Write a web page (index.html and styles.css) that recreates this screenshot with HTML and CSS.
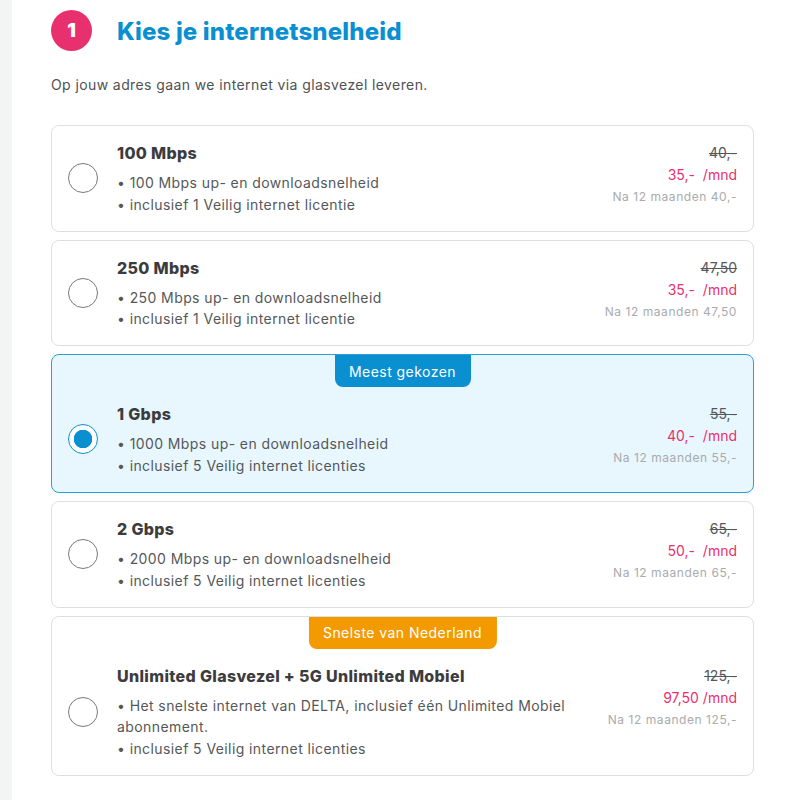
FILE: index.html
```html
<!DOCTYPE html>
<html lang="nl">
<head>
<meta charset="utf-8">
<title>Kies je internetsnelheid</title>
<link rel="stylesheet" href="styles.css">
</head>
<body>
<div class="page">
  <div class="rail"></div>
  <main class="main">
    <header class="head">
      <span class="step">1</span>
      <h1 class="title">Kies je internetsnelheid</h1>
    </header>
    <p class="intro">Op jouw adres gaan we internet via glasvezel leveren.</p>
    <div class="list">
      <label class="card">
        <span class="radio"></span>
        <div class="body">
          <h2 class="name">100 Mbps</h2>
          <p class="desc">• 100 Mbps up- en downloadsnelheid<br>• inclusief 1 Veilig internet licentie</p>
        </div>
        <div class="price">
          <s class="old">40,-</s>
          <span class="now">35,- &nbsp;/mnd</span>
          <span class="later">Na 12 maanden 40,-</span>
        </div>
      </label>
      <label class="card">
        <span class="radio"></span>
        <div class="body">
          <h2 class="name">250 Mbps</h2>
          <p class="desc">• 250 Mbps up- en downloadsnelheid<br>• inclusief 1 Veilig internet licentie</p>
        </div>
        <div class="price">
          <s class="old">47,50</s>
          <span class="now">35,- &nbsp;/mnd</span>
          <span class="later">Na 12 maanden 47,50</span>
        </div>
      </label>
      <label class="card badged selected">
        <span class="badge blue">Meest gekozen</span>
        <span class="radio"></span>
        <div class="body">
          <h2 class="name">1 Gbps</h2>
          <p class="desc">• 1000 Mbps up- en downloadsnelheid<br>• inclusief 5 Veilig internet licenties</p>
        </div>
        <div class="price">
          <s class="old">55,-</s>
          <span class="now">40,- &nbsp;/mnd</span>
          <span class="later">Na 12 maanden 55,-</span>
        </div>
      </label>
      <label class="card">
        <span class="radio"></span>
        <div class="body">
          <h2 class="name">2 Gbps</h2>
          <p class="desc">• 2000 Mbps up- en downloadsnelheid<br>• inclusief 5 Veilig internet licenties</p>
        </div>
        <div class="price">
          <s class="old">65,-</s>
          <span class="now">50,- &nbsp;/mnd</span>
          <span class="later">Na 12 maanden 65,-</span>
        </div>
      </label>
      <label class="card badged">
        <span class="badge orange">Snelste van Nederland</span>
        <span class="radio"></span>
        <div class="body">
          <h2 class="name">Unlimited Glasvezel + 5G Unlimited Mobiel</h2>
          <p class="desc">• Het snelste internet van DELTA, inclusief één Unlimited Mobiel abonnement.<br>• inclusief 5 Veilig internet licenties</p>
        </div>
        <div class="price">
          <s class="old">125,-</s>
          <span class="now">97,50 /mnd</span>
          <span class="later">Na 12 maanden 125,-</span>
        </div>
      </label>
    </div>
  </main>
</div>
</body>
</html>
```
FILE: styles.css
```css
* { box-sizing: border-box; }
html, body { margin: 0; padding: 0; background: #fff; }
body { font-family: "Inter", "Liberation Sans", sans-serif; color: #4a4a4a; }
.page { display: flex; height: 800px; overflow: hidden; }
.rail { width: 12px; flex: none; background: #f3f5f5; }
.main { flex: 1; padding: 10px 34px 0 39px; min-width: 0; }
.head { display: flex; align-items: center; gap: 25px; height: 41px; }
.step {
  width: 41px; height: 41px; border-radius: 50%; background: #e9306f; color: #fff;
  display: flex; align-items: center; justify-content: center;
  font-size: 19px; font-weight: 900;
}
.title { margin: 0; padding-top: 2px; font-size: 24px; line-height: 41px; font-weight: 800; color: #0a8fd1; letter-spacing: 0.17px; }
.intro { margin: 23px 0 0; font-size: 14px; line-height: 22px; color: #4f5254; letter-spacing: 0.4px; }
.list { margin-top: 29.1px; display: flex; flex-direction: column; gap: 8px; }
.card {
  position: relative; display: flex; align-items: center;
  min-height: 106.7px; padding: 15px 16px 15.7px; background: #fff;
  border: 1px solid #dcdfe5; border-radius: 8px;
}
.badged { padding-top: 47px; align-items: stretch; }
.badged .radio { align-self: center; }
.selected { background: #e8f6fe; border-color: #2a9fd8; }
.radio { width: 30px; height: 30px; flex: none; border: 1px solid #77797b; border-radius: 50%; background: #fff; margin-right: 19px; }
.badged .radio { position: relative; top: 16px; margin-top: -32px; }
.selected .radio { border-color: #0a8fd1; background: radial-gradient(circle, #0a8fd1 0 9px, #fff 9.5px); }
.body { flex: 1; min-width: 0; }
.name { margin: 0; font-size: 16px; line-height: 24px; font-weight: 800; color: #3c3c3e; letter-spacing: 0.34px; }
.desc { margin: 7px 0 0; font-size: 14px; line-height: 21.5px; color: #55585a; letter-spacing: 0.41px; }
.price { width: 150px; flex: none; display: flex; flex-direction: column; align-items: flex-end; align-self: flex-start; text-align: right; font-size: 14px; line-height: 22px; white-space: nowrap; }
.old { color: #55585a; margin-top: 1px; }
.now { color: #e9306f; }
.later { color: #a9abae; font-size: 12px; line-height: 21px; letter-spacing: 0.55px; }
.badge {
  position: absolute; top: 0; left: 50%; transform: translateX(-50%);
  height: 32px; padding: 0 14.5px; border-radius: 0 0 8px 8px;
  display: flex; align-items: center; color: #fff; font-size: 14px; letter-spacing: 0.45px; white-space: nowrap;
}
.blue { background: #0a8fd1; }
.orange { background: #f39a00; }
```
